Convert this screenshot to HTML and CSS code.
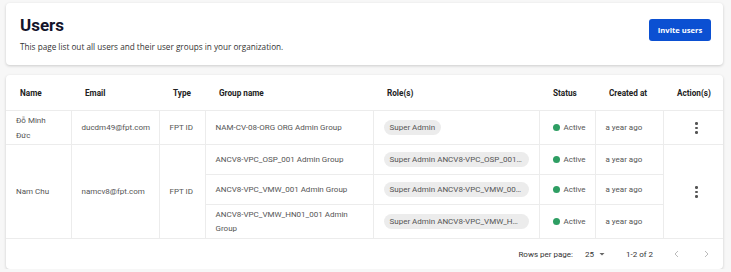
FILE: index.html
```html
<!DOCTYPE html>
<html lang="en">
<head>
    <meta charset="UTF-8">
    <meta name="viewport" content="width=device-width, initial-scale=1.0">
    <title>Users</title>
    <link rel="stylesheet" href="styles.css">
</head>
<body>
    <div class="page">
        <!-- Page header -->
        <div class="card page-header">
            <div class="heading">
                <h1 class="title">Users</h1>
                <div class="subtitle">This page list out all users and their user groups in your organization.</div>
            </div>
            <button class="btn-primary">Invite users</button>
        </div>

        <!-- Users table -->
        <div class="card table-card">
            <table class="users">
                <colgroup>
                    <col style="width: 65px">
                    <col style="width: 88px">
                    <col style="width: 46px">
                    <col style="width: 168px">
                    <col style="width: 166px">
                    <col style="width: 56px">
                    <col style="width: 68px">
                    <col>
                </colgroup>
                <thead>
                    <tr>
                        <th>Name</th>
                        <th>Email</th>
                        <th>Type</th>
                        <th>Group name</th>
                        <th>Role(s)</th>
                        <th>Status</th>
                        <th>Created at</th>
                        <th>Action(s)</th>
                    </tr>
                </thead>
                <tbody>
                    <tr class="row-tall">
                        <td class="name">Đỗ Minh Đức</td>
                        <td>ducdm49@fpt.com</td>
                        <td>FPT ID</td>
                        <td>NAM-CV-08-ORG ORG Admin Group</td>
                        <td><span class="chip">Super Admin</span></td>
                        <td><span class="status"><span class="dot"></span>Active</span></td>
                        <td>a year ago</td>
                        <td class="actions"><span class="kebab"><i></i><i></i><i></i></span></td>
                    </tr>
                    <tr class="row-short">
                        <td rowspan="3" class="name">Nam Chu</td>
                        <td rowspan="3">namcv8@fpt.com</td>
                        <td rowspan="3">FPT ID</td>
                        <td>ANCV8-VPC_OSP_001 Admin Group</td>
                        <td><span class="chip chip-wide">Super Admin ANCV8-VPC_OSP_001 Admin Group</span></td>
                        <td><span class="status"><span class="dot"></span>Active</span></td>
                        <td>a year ago</td>
                        <td rowspan="3" class="actions"><span class="kebab"><i></i><i></i><i></i></span></td>
                    </tr>
                    <tr class="row-short">
                        <td>ANCV8-VPC_VMW_001 Admin Group</td>
                        <td><span class="chip chip-wide">Super Admin ANCV8-VPC_VMW_001 Admin Group</span></td>
                        <td><span class="status"><span class="dot"></span>Active</span></td>
                        <td>a year ago</td>
                    </tr>
                    <tr class="row-tall">
                        <td class="wrap">ANCV8-VPC_VMW_HN01_001 Admin Group</td>
                        <td><span class="chip chip-wide">Super Admin ANCV8-VPC_VMW_HN01_001 Admin Group</span></td>
                        <td><span class="status"><span class="dot"></span>Active</span></td>
                        <td>a year ago</td>
                    </tr>
                </tbody>
            </table>

            <div class="pager">
                <span class="pager-label">Rows per page:</span>
                <span class="pager-select">25
                    <svg width="8" height="8" viewBox="0 0 8 8"><path d="M1.5 3h5L4 5.5z" fill="#666"/></svg>
                </span>
                <span class="pager-range">1-2 of 2</span>
                <span class="pager-nav">
                    <svg width="10" height="10" viewBox="0 0 10 10"><path d="M6 2L3 5l3 3" fill="none" stroke="#bbb" stroke-width="1"/></svg>
                </span>
                <span class="pager-nav">
                    <svg width="10" height="10" viewBox="0 0 10 10"><path d="M4 2l3 3-3 3" fill="none" stroke="#bbb" stroke-width="1"/></svg>
                </span>
            </div>
        </div>
    </div>
</body>
</html>
```

FILE: styles.css
```css
body {
    margin: 0;
    padding: 3px 8px 0 6px;
    background-color: #f7f7f7;
    font-family: Roboto, Arial, sans-serif;
    color: #555;
}
.page {
    display: flex;
    flex-direction: column;
    gap: 10px;
}
.card {
    background: #fff;
    border-radius: 4px;
    box-shadow: 0 1px 3px rgba(0,0,0,0.18);
}
.page-header {
    height: 62px;
    box-sizing: border-box;
    padding: 12px 12px 0 14px;
    display: flex;
    justify-content: space-between;
    align-items: flex-start;
}
.title {
    margin: 0;
    font-family: Roboto, Arial, sans-serif;
    font-size: 17px;
    font-weight: 700;
    line-height: 20px;
    color: #14142b;
}
.subtitle {
    margin-top: 6px;
    font-family: "Open Sans", Arial, sans-serif;
    font-size: 8.2px;
    color: #333;
}
.btn-primary {
    margin-top: 4px;
    width: 62px;
    height: 22px;
    border: none;
    border-radius: 3px;
    background: #0b50d2;
    color: #fff;
    font-family: "Open Sans", Arial, sans-serif;
    font-size: 7.6px;
    font-weight: 700;
    padding: 0;
}
.table-card {
    overflow: hidden;
}
.users {
    width: 100%;
    table-layout: fixed;
    border-collapse: collapse;
    font-size: 8px;
}
.users th {
    height: 35px;
    padding: 0 0 0 14px;
    text-align: left;
    font-size: 8.2px;
    font-weight: 700;
    color: #222;
    border-bottom: 1px solid #ececec;
}
.users td {
    padding: 0 4px 0 10px;
    line-height: 15px;
    color: #555;
    border: 1px solid #ececec;
}
.users td.name {
    padding-right: 14px;
}
.users td.wrap {
    line-height: 14px;
}
.users tr td:first-child {
    border-left: none;
}
.users tr td.actions {
    border-right: none;
}
.row-tall {
    height: 34px;
}
.row-short {
    height: 30px;
}
.chip {
    display: inline-block;
    height: 15px;
    line-height: 15px;
    padding: 0 6px;
    border-radius: 8px;
    background: #ececec;
    color: #555;
    font-size: 8px;
    vertical-align: middle;
}
.chip-wide {
    box-sizing: border-box;
    width: 145px;
    white-space: nowrap;
    overflow: hidden;
    text-overflow: ellipsis;
}
.status {
    display: inline-flex;
    align-items: center;
    gap: 4px;
    padding-left: 3px;
}
.dot {
    width: 7px;
    height: 7px;
    border-radius: 50%;
    background: #2e9e63;
}
.actions {
    text-align: center;
}
.kebab {
    display: inline-flex;
    flex-direction: column;
    gap: 2px;
    vertical-align: middle;
}
.kebab i {
    width: 2.5px;
    height: 2.5px;
    border-radius: 50%;
    background: #555;
}
.pager {
    height: 30px;
    display: flex;
    align-items: center;
    justify-content: flex-end;
    padding-right: 12px;
    font-size: 8px;
    color: #333;
}
.pager-select {
    display: inline-flex;
    align-items: center;
    gap: 4px;
    margin-left: 12px;
}
.pager-range {
    margin-left: 20px;
}
.pager-nav {
    display: inline-flex;
    margin-left: 19px;
}
```
